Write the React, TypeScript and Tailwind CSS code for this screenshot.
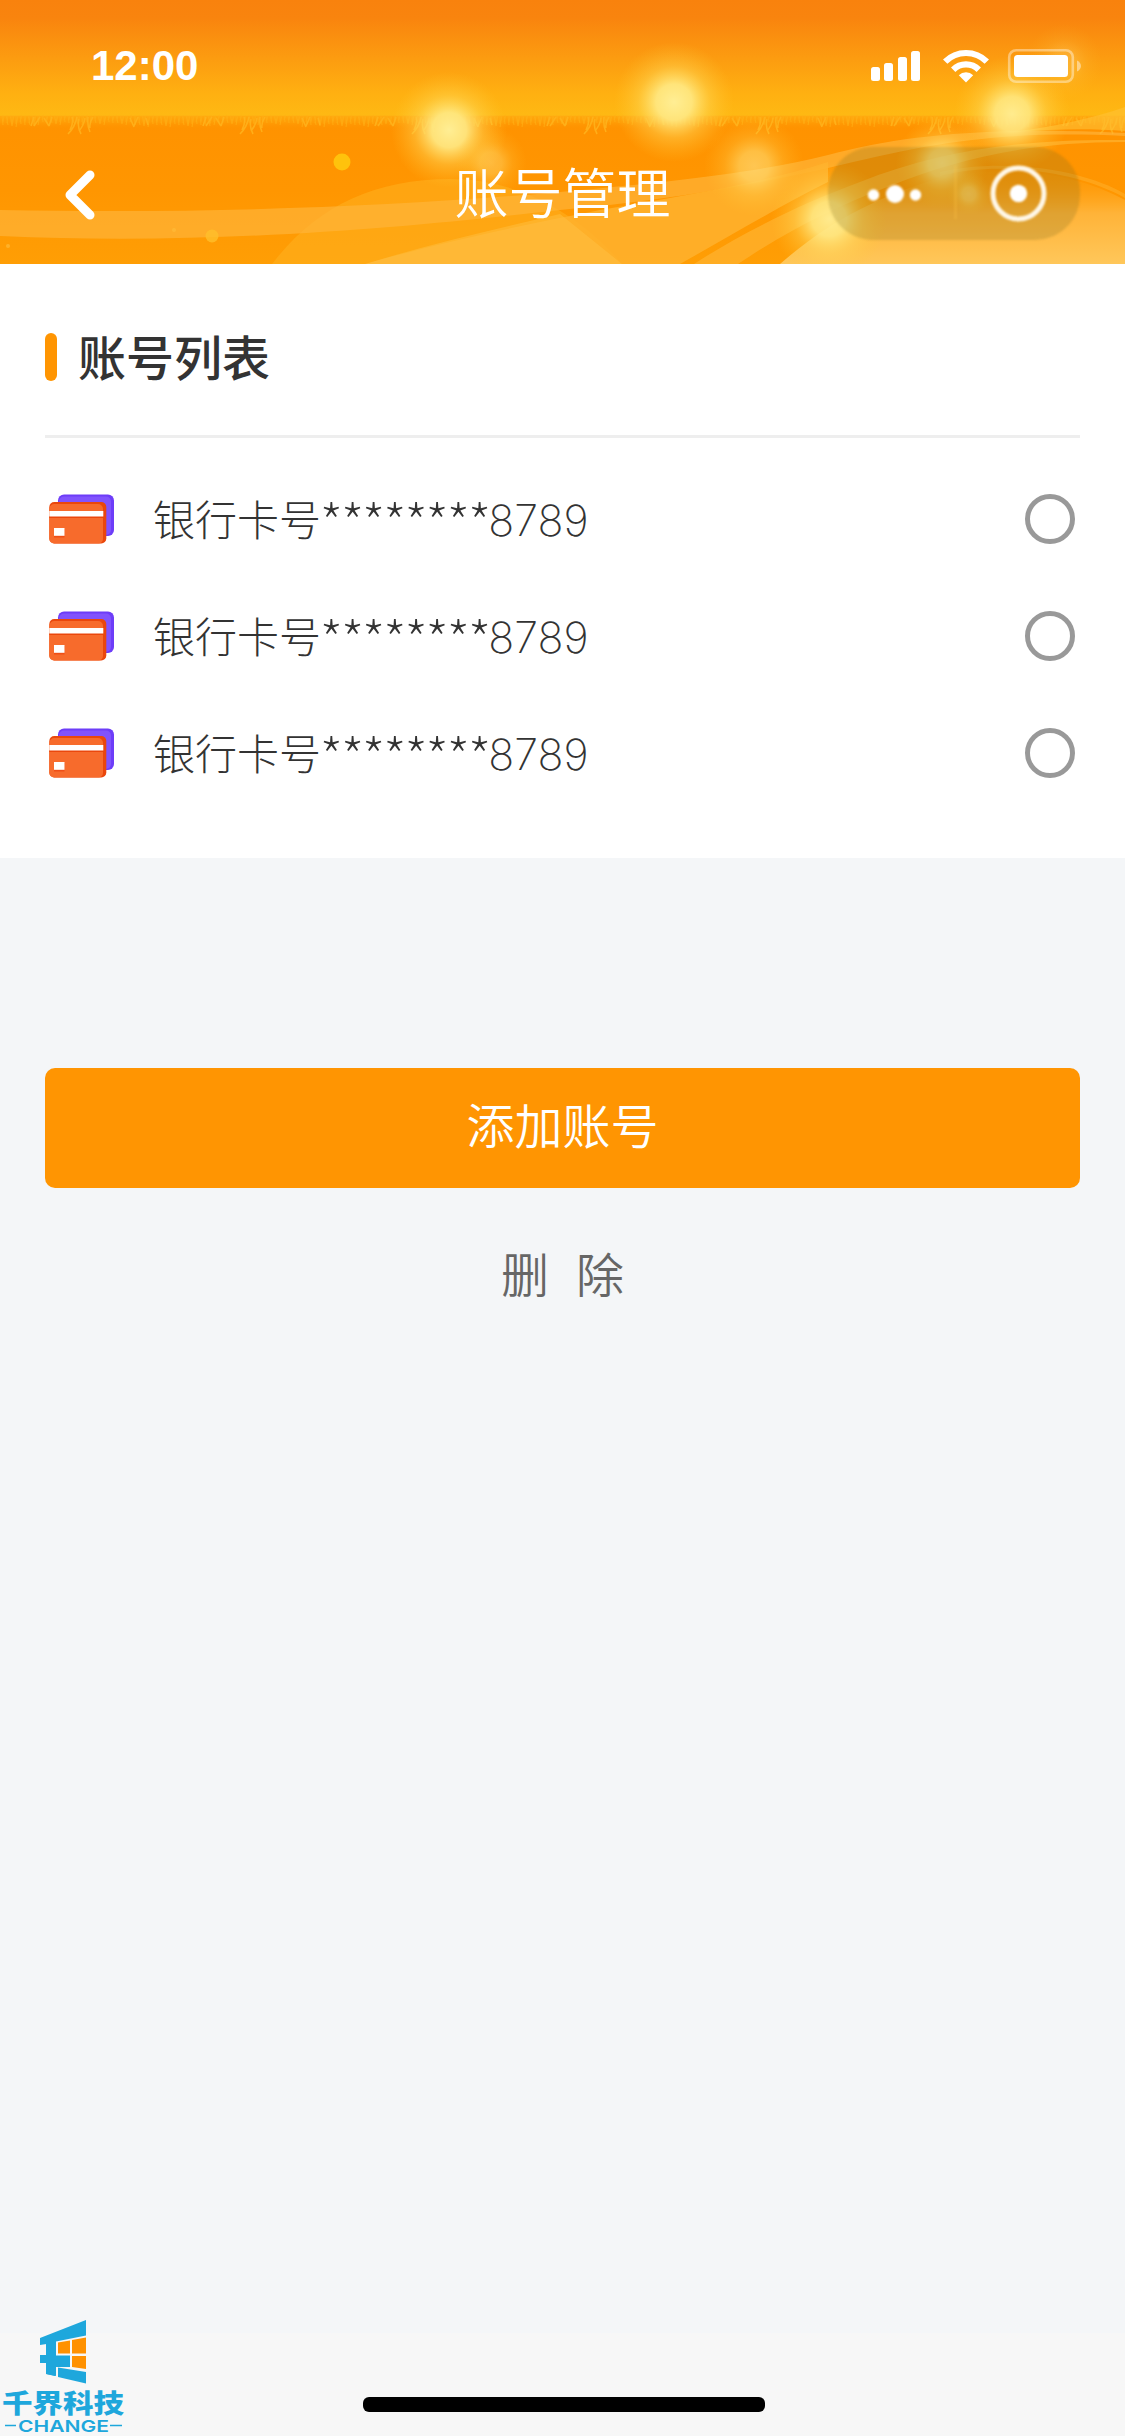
import React, { useState } from "react";

interface Account {
  id: number;
  label: string;
  mask: string;
  tail: string;
}

const accounts: Account[] = [
  { id: 1, label: "银行卡号", mask: "********", tail: "8789" },
  { id: 2, label: "银行卡号", mask: "********", tail: "8789" },
  { id: 3, label: "银行卡号", mask: "********", tail: "8789" },
];

const glows = [
  { x: 449, y: 130, r: 58, o: 1 },
  { x: 674, y: 102, r: 60, o: 1 },
  { x: 754, y: 166, r: 50, o: 0.55 },
  { x: 1012, y: 114, r: 58, o: 0.95 },
  { x: 829, y: 219, r: 58, o: 0.95 },
  { x: 942, y: 163, r: 46, o: 0.8 },
  { x: 969, y: 194, r: 22, o: 0.5 },
  { x: 491, y: 163, r: 36, o: 0.4 },
  { x: 1064, y: 62, r: 38, o: 0.25 },
];

// Short blades hanging from the horizon, repeated every 172px
function buildGrass() {
  let d = "";
  for (let x = 0; x < 1125; x += 2) {
    const k = (x * 7) % 11;
    const phase = (x + 92) % 172;
    const len = 5 + (k % 6) + (phase > 50 && phase < 130 ? 2 : 0);
    d += `M${x} 115l${(k % 5) - 2} ${len}`;
  }
  return d;
}

function buildTufts() {
  let d = "";
  for (let x = 80; x < 1150; x += 172) {
    d += `M${x - 3} 117q-2 10-9 17M${x - 8} 117q2 5-2 13M${x - 1} 119q-2 8 2 15M${x + 5} 118q-1 7-6 13M${x + 8} 117q-1 9 2 15M${x + 13} 117q-4 6-3 11`;
    d += `M${x - 46} 117l-3 9M${x - 40} 117l-6 9M${x - 36} 118l5 8M${x - 28} 117l-3 9M${x + 50} 118l4 9M${x + 58} 117l-4 9M${x + 66} 118l2 7`;
  }
  return d;
}

function HeaderArt() {
  return (
    <svg className="absolute inset-0" width="1125" height="264" viewBox="0 0 1125 264">
      <defs>
        <linearGradient id="sky" x1="0" y1="0" x2="0" y2="1">
          <stop offset="0" stopColor="#f9820d" />
          <stop offset="0.15" stopColor="#f9840e" />
          <stop offset="0.5" stopColor="#fc9c10" />
          <stop offset="0.8" stopColor="#ffb011" />
          <stop offset="1" stopColor="#feb913" />
        </linearGradient>
        <linearGradient id="ground" x1="0" y1="0" x2="0" y2="1">
          <stop offset="0" stopColor="#ff9200" />
          <stop offset="0.5" stopColor="#ff9601" />
          <stop offset="1" stopColor="#ff9e05" />
        </linearGradient>
        <linearGradient id="fringe" x1="0" y1="0" x2="0" y2="1">
          <stop offset="0" stopColor="#ffae10" stopOpacity="0.85" />
          <stop offset="0.5" stopColor="#ffa60c" stopOpacity="0.5" />
          <stop offset="1" stopColor="#ff9600" stopOpacity="0" />
        </linearGradient>
        <linearGradient id="mound" x1="0" y1="0" x2="0" y2="1">
          <stop offset="0" stopColor="#ff9a05" stopOpacity="0.2" />
          <stop offset="0.45" stopColor="#ffb338" />
          <stop offset="1" stopColor="#ffc75a" />
        </linearGradient>
        <radialGradient id="glow">
          <stop offset="0" stopColor="#ffee94" />
          <stop offset="0.3" stopColor="#ffe983" stopOpacity="0.92" />
          <stop offset="0.6" stopColor="#ffdc5c" stopOpacity="0.4" />
          <stop offset="1" stopColor="#ffc830" stopOpacity="0" />
        </radialGradient>
      </defs>
      <rect width="1125" height="117" fill="url(#sky)" />
      <rect y="116" width="1125" height="148" fill="url(#ground)" />
      <rect y="116" width="1125" height="13" fill="url(#fringe)" />
      <path d={buildGrass()} stroke="#ffae14" strokeWidth="1.1" fill="none" opacity="0.75" />
      <path d={buildTufts()} stroke="#ffb31c" strokeWidth="1.6" fill="none" opacity="0.85" />
      <path d="M272 264C315 208 372 179 450 179C520 179 580 215 622 264Z" fill="#ffb322" opacity="0.5" />
      <path
        d="M0 210C220 214 400 206 560 192C680 181 760 172 828 155C910 133 1000 127 1125 133V136C1000 130 930 143 828 168C720 192 640 203 560 210C420 226 220 246 0 236Z"
        fill="#ffb63c"
        opacity="0.65"
      />
      <path d="M1010 132C1050 128 1090 119 1125 107V131C1090 128 1050 129 1010 132Z" fill="#ffc136" opacity="0.6" />
      <path d="M365 264C450 240 520 226 600 210C680 196 760 184 828 162V182C780 206 730 236 680 264Z" fill="#ffb22e" opacity="0.85" />
      <path d="M365 264C430 244 500 228 560 214L622 264Z" fill="#ffc348" opacity="0.45" />
      <path d="M694 264C740 234 800 204 860 182C940 150 1020 139 1125 140V142C1030 142 960 158 890 186C830 208 780 236 738 264Z" fill="#ffb22e" opacity="0.75" />
      <path d="M780 264C830 220 880 196 940 178C1000 165 1070 170 1125 200V264Z" fill="url(#mound)" />
      <path d="M940 176C1000 160 1080 172 1125 198V194C1080 168 1000 158 940 172Z" fill="#ffae26" opacity="0.6" />
      {glows.map((g) => (
        <circle key={`${g.x}-${g.y}`} cx={g.x} cy={g.y} r={g.r} fill="url(#glow)" opacity={g.o} />
      ))}
      <circle cx="342" cy="162" r="8.5" fill="#ffc20c" />
      <circle cx="212" cy="236" r="6.5" fill="#ffbf2a" opacity="0.8" />
      <circle cx="174" cy="230" r="2" fill="#ffbb38" opacity="0.7" />
      <circle cx="8" cy="246" r="2" fill="#ffbb38" opacity="0.7" />
    </svg>
  );
}

function StatusIcons() {
  return (
    <svg width="212" height="36" viewBox="870 48 212 36" fill="#fff">
      <rect x="871" y="67" width="9" height="14" rx="2.5" />
      <rect x="884" y="63" width="9" height="18" rx="2.5" />
      <rect x="898" y="57" width="9" height="24" rx="2.5" />
      <rect x="911" y="51" width="9" height="30" rx="2.5" />
      <path d="M966 82.5L958.8 75.2A10.2 10.2 0 0 1 973.2 75.2Z" />
      <path d="M953.2 69.7A18.1 18.1 0 0 1 978.8 69.7" fill="none" stroke="#fff" strokeWidth="6.2" />
      <path d="M945.2 61.6A29.4 29.4 0 0 1 986.8 61.6" fill="none" stroke="#fff" strokeWidth="6.2" />
      <rect x="1009.2" y="50.2" width="63.6" height="31.6" rx="7" fill="none" stroke="#fff" strokeWidth="2.6" opacity="0.4" />
      <rect x="1014" y="55" width="54" height="22" rx="3.5" />
      <path d="M1077 60.5C1082.3 63 1082.3 69 1077 71.5Z" opacity="0.45" />
    </svg>
  );
}

function Capsule() {
  return (
    <svg className="blur-[0.8px]" width="252" height="93" viewBox="828 147 252 93">
      <rect x="828" y="147" width="252" height="93" rx="45" fill="#7c6b1e" opacity="0.24" />
      <circle cx="873.5" cy="195" r="5.7" fill="#fff" />
      <circle cx="895" cy="194" r="9" fill="#fff" />
      <circle cx="915.5" cy="195" r="5.7" fill="#fff" />
      <path d="M955.5 166V219" stroke="#ffc64a" strokeWidth="2" opacity="0.35" />
      <circle cx="1018.5" cy="193.5" r="25.5" fill="none" stroke="#fff7e8" strokeWidth="5" />
      <circle cx="1018.5" cy="193.5" r="8.7" fill="#fff" />
    </svg>
  );
}

function CardIcon() {
  return (
    <svg className="ml-1 shrink-0" width="66" height="50" viewBox="0 0 66 50">
      <rect x="9" y="0.5" width="56" height="41.5" rx="6" fill="#6d3df8" />
      <rect x="10" y="2.5" width="52" height="38.5" rx="5" fill="#8153fd" />
      <rect x="0.3" y="8" width="57" height="41.5" rx="5" fill="#ea470c" />
      <path d="M0.3 15a5 5 0 0 1 5-5H49a5 5 0 0 1 5 5V45a4.5 4.5 0 0 1-4.5 4.5H5a4.7 4.7 0 0 1-4.7-4.7Z" fill="#f76b2c" />
      <rect x="0.3" y="22" width="54" height="2" fill="#ea470c" />
      <rect x="0.3" y="17" width="54" height="5.5" fill="#fff" />
      <rect x="5" y="35" width="10.5" height="8.5" fill="#ef4f16" />
      <rect x="5" y="34" width="10.5" height="7.8" fill="#fff" />
    </svg>
  );
}

function BrandLogo() {
  return (
    <svg className="absolute bottom-0 left-0" width="140" height="126" viewBox="0 0 140 126">
      <g fill="#1ea7dc">
        <path d="M40 28L86 10V25.5L56 31.5V45.5H70V57H56V66L46.5 64V53H40V45H46.5V34L40 35Z" />
        <path d="M58 57.5L86 62V73.5L58 67Z" />
        <path d="M46 33H55V66L46 64Z" />
      </g>
      <g fill="#ff9100">
        <path d="M58 32.5L70 30.5V43.5H58Z" />
        <path d="M72 30L86 27.5V43.5H72Z" />
        <path d="M72 46H86V59L72 57Z" />
      </g>
      <text x="2" y="102.5" textLength="122" lengthAdjust="spacingAndGlyphs" fill="#1ea7dc" className="font-['Noto_Sans_CJK_SC',sans-serif] text-[26px] font-black">
        千界科技
      </text>
      <text x="18" y="122" textLength="91" lengthAdjust="spacingAndGlyphs" fill="#1ea7dc" className="font-['Inter',sans-serif] text-[16.5px] font-semibold">
        CHANGE
      </text>
      <path d="M5 115.5H16M110 115.5H122" stroke="#1ea7dc" strokeWidth="1.5" />
    </svg>
  );
}

export default function App() {
  const [selected, setSelected] = useState<number | null>(null);

  return (
    <div className="relative flex h-[2436px] w-[1125px] flex-col overflow-hidden bg-[#f4f6f8] font-['Noto_Sans_CJK_SC',sans-serif]">
      <header className="relative h-[264px] shrink-0">
        <HeaderArt />
        <div className="relative flex h-[132px] items-center justify-between pl-[91px] pr-[43px]">
          <span className="font-['Liberation_Sans',sans-serif] text-[42px] font-bold leading-none text-white">
            12:00
          </span>
          <StatusIcons />
        </div>
        <div className="relative grid h-[123px] grid-cols-[1fr_auto_1fr] items-center px-[45px]">
          <button type="button" aria-label="返回" className="ml-5 mt-[3px] w-fit">
            <svg width="30" height="50" viewBox="0 0 30 50" fill="none">
              <path d="M25 5L5 25L25 45" stroke="#fff" strokeWidth="9" strokeLinecap="round" strokeLinejoin="round" />
            </svg>
          </button>
          <h1 className="pb-[5px] text-[54px] font-[350] leading-none text-white">账号管理</h1>
          <div className="justify-self-end">
            <Capsule />
          </div>
        </div>
      </header>

      <section className="h-[594px] shrink-0 bg-white px-[45px]">
        <div className="flex h-[174px] items-center gap-[21px] border-b-[3px] border-[#eeeeee] pt-[17px] pb-[3px]">
          <span className="h-12 w-3 rounded-full bg-[#ff9502]" />
          <h2 className="pb-1 text-[48px] font-medium leading-none text-[#333333]">账号列表</h2>
        </div>
        <ul className="pt-[22px]">
          {accounts.map((account) => (
            <li key={account.id} className="flex h-[117px] items-center pr-[5px]">
              <CardIcon />
              <span className="ml-[38px] flex flex-1 items-baseline pb-[7px] text-[42px] font-light leading-none text-[#333333]">
                {account.label}
                <span className="-ml-0.5 h-[42px] translate-y-[12px] text-[58px] font-thin leading-[42px] tracking-[-3.6px]">
                  {account.mask}
                </span>
                <span className="font-['Inter',sans-serif] text-[43px] font-[250] leading-[42px]">{account.tail}</span>
              </span>
              <button
                type="button"
                aria-label={account.label}
                onClick={() => setSelected(account.id)}
                className={`size-[50px] rounded-full border-[5px] ${
                  selected === account.id ? "border-[#ff9502]" : "border-[#999999]"
                }`}
              />
            </li>
          ))}
        </ul>
      </section>

      <div className="flex flex-1 flex-col items-center px-[45px] pt-[210px]">
        <button type="button" className="h-[120px] w-full rounded-[10px] bg-[#ff9502] pb-[10px] text-[48px] font-[350] leading-none text-white">
          添加账号
        </button>
        <button type="button" className="mt-[60px] flex gap-[27px] text-[48px] font-[350] leading-none text-[#666666]">
          <span>删</span>
          <span>除</span>
        </button>
      </div>

      <footer className="relative flex h-[103px] shrink-0 justify-center bg-[#f7f7f7] pl-[3px] pt-16">
        <div className="h-[15px] w-[402px] rounded-[6px] bg-black" />
        <BrandLogo />
      </footer>
    </div>
  );
}
